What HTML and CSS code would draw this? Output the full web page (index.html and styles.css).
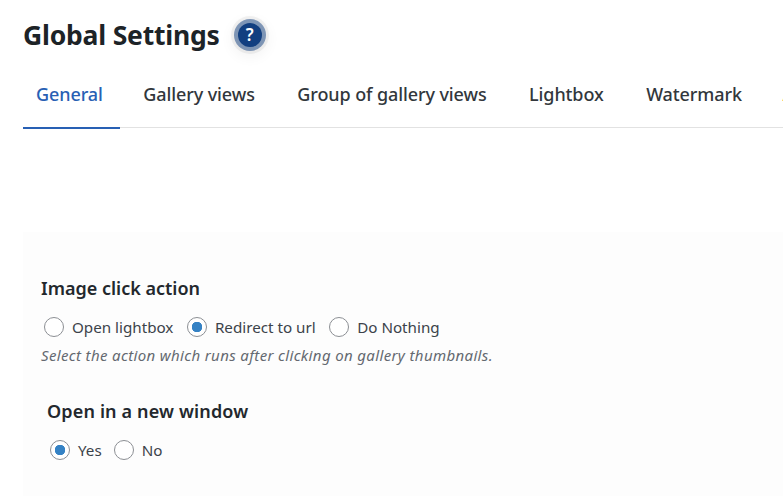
FILE: index.html
```html
<!DOCTYPE html>
<html lang="en">
<head>
    <meta charset="UTF-8">
    <meta name="viewport" content="width=device-width, initial-scale=1.0">
    <title>Global Settings</title>
    <link rel="stylesheet" href="styles.css">
</head>
<body>
    <div class="page">
        <div class="title-row">
            <h1>Global Settings</h1>
            <span class="help-badge">?</span>
        </div>
        <nav class="tabs">
            <a class="tab active">General</a>
            <a class="tab">Gallery views</a>
            <a class="tab">Group of gallery views</a>
            <a class="tab">Lightbox</a>
            <a class="tab">Watermark</a>
            <a class="tab tab-pro">Advertisement</a>
        </nav>
        <div class="panel">
            <div class="option">
                <h2>Image click action</h2>
                <div class="radio-row">
                    <label class="radio"><span class="dot"></span>Open lightbox</label>
                    <label class="radio"><span class="dot checked"></span>Redirect to url</label>
                    <label class="radio"><span class="dot"></span>Do Nothing</label>
                </div>
                <p class="hint">Select the action which runs after clicking on gallery thumbnails.</p>
            </div>
            <div class="option option-sub">
                <h2>Open in a new window</h2>
                <div class="radio-row">
                    <label class="radio"><span class="dot checked"></span>Yes</label>
                    <label class="radio"><span class="dot"></span>No</label>
                </div>
            </div>
        </div>
    </div>
</body>
</html>
```

FILE: styles.css
```css
html, body {
    margin: 0;
    height: 100%;
    overflow: hidden;
}
body {
    font-family: 'Noto Sans', 'Open Sans', sans-serif;
    background-color: #fff;
    color: #32373c;
}
.page {
    padding: 0 0 0 23px;
    width: 1000px;
}
.title-row {
    display: flex;
    align-items: center;
    gap: 18px;
    height: 70px;
}
h1 {
    margin: 0;
    font-size: 26.5px;
    font-weight: 700;
    letter-spacing: -0.2px;
    color: #1d2327;
}
.help-badge {
    width: 24px;
    height: 24px;
    border-radius: 50%;
    background-color: #123f80;
    color: #fff;
    font-size: 17px;
    font-weight: 600;
    line-height: 24px;
    text-align: center;
    box-shadow: 0 0 0 4px rgba(18,63,128,0.5), 0 0 0 7px rgba(0,0,0,0.05), 0 4px 14px 6px rgba(0,0,0,0.05);
}
.tabs {
    display: flex;
    height: 57px;
    border-bottom: 1px solid #e2e2e2;
    white-space: nowrap;
}
.tab {
    padding: 12px 19px 0 13px;
    margin-right: 10.5px;
    font-size: 18px;
    font-weight: 500;
    letter-spacing: -0.1px;
    height: 45px;
    color: #32373c;
}
.tab.active {
    padding-right: 17px;
    color: #2860b4;
    border-bottom: 2px solid #2860b4;
}
.tab-pro {
    margin-left: -2px;
    color: #e8912d;
}
.panel {
    margin-top: 104px;
    background-color: #fdfdfd;
    height: 264px;
    padding: 44px 18px 0;
    box-sizing: border-box;
}
.option h2 {
    margin: 0;
    font-size: 18px;
    font-weight: 600;
    color: #23282d;
}
.radio-row {
    display: flex;
    gap: 10.5px;
    margin-top: 17px;
}
.radio {
    display: flex;
    align-items: center;
    gap: 8px;
    margin-left: 3px;
    font-size: 15.2px;
    color: #3c434a;
}
.dot {
    width: 18px;
    height: 18px;
    border: 1px solid #8c8f94;
    border-radius: 50%;
    background-color: #fff;
    display: inline-block;
}
.dot.checked {
    background: radial-gradient(circle, #3582c4 0 5px, #fff 5.5px);
}
.hint {
    margin: 8px 0 0;
    font-size: 15px;
    font-style: italic;
    letter-spacing: 0.36px;
    color: #646970;
}
.option-sub {
    margin: 34px 0 0 6px;
}
.option-sub h2 {
    letter-spacing: 0.15px;
}
.option-sub .radio-row {
    gap: 9px;
}
```
